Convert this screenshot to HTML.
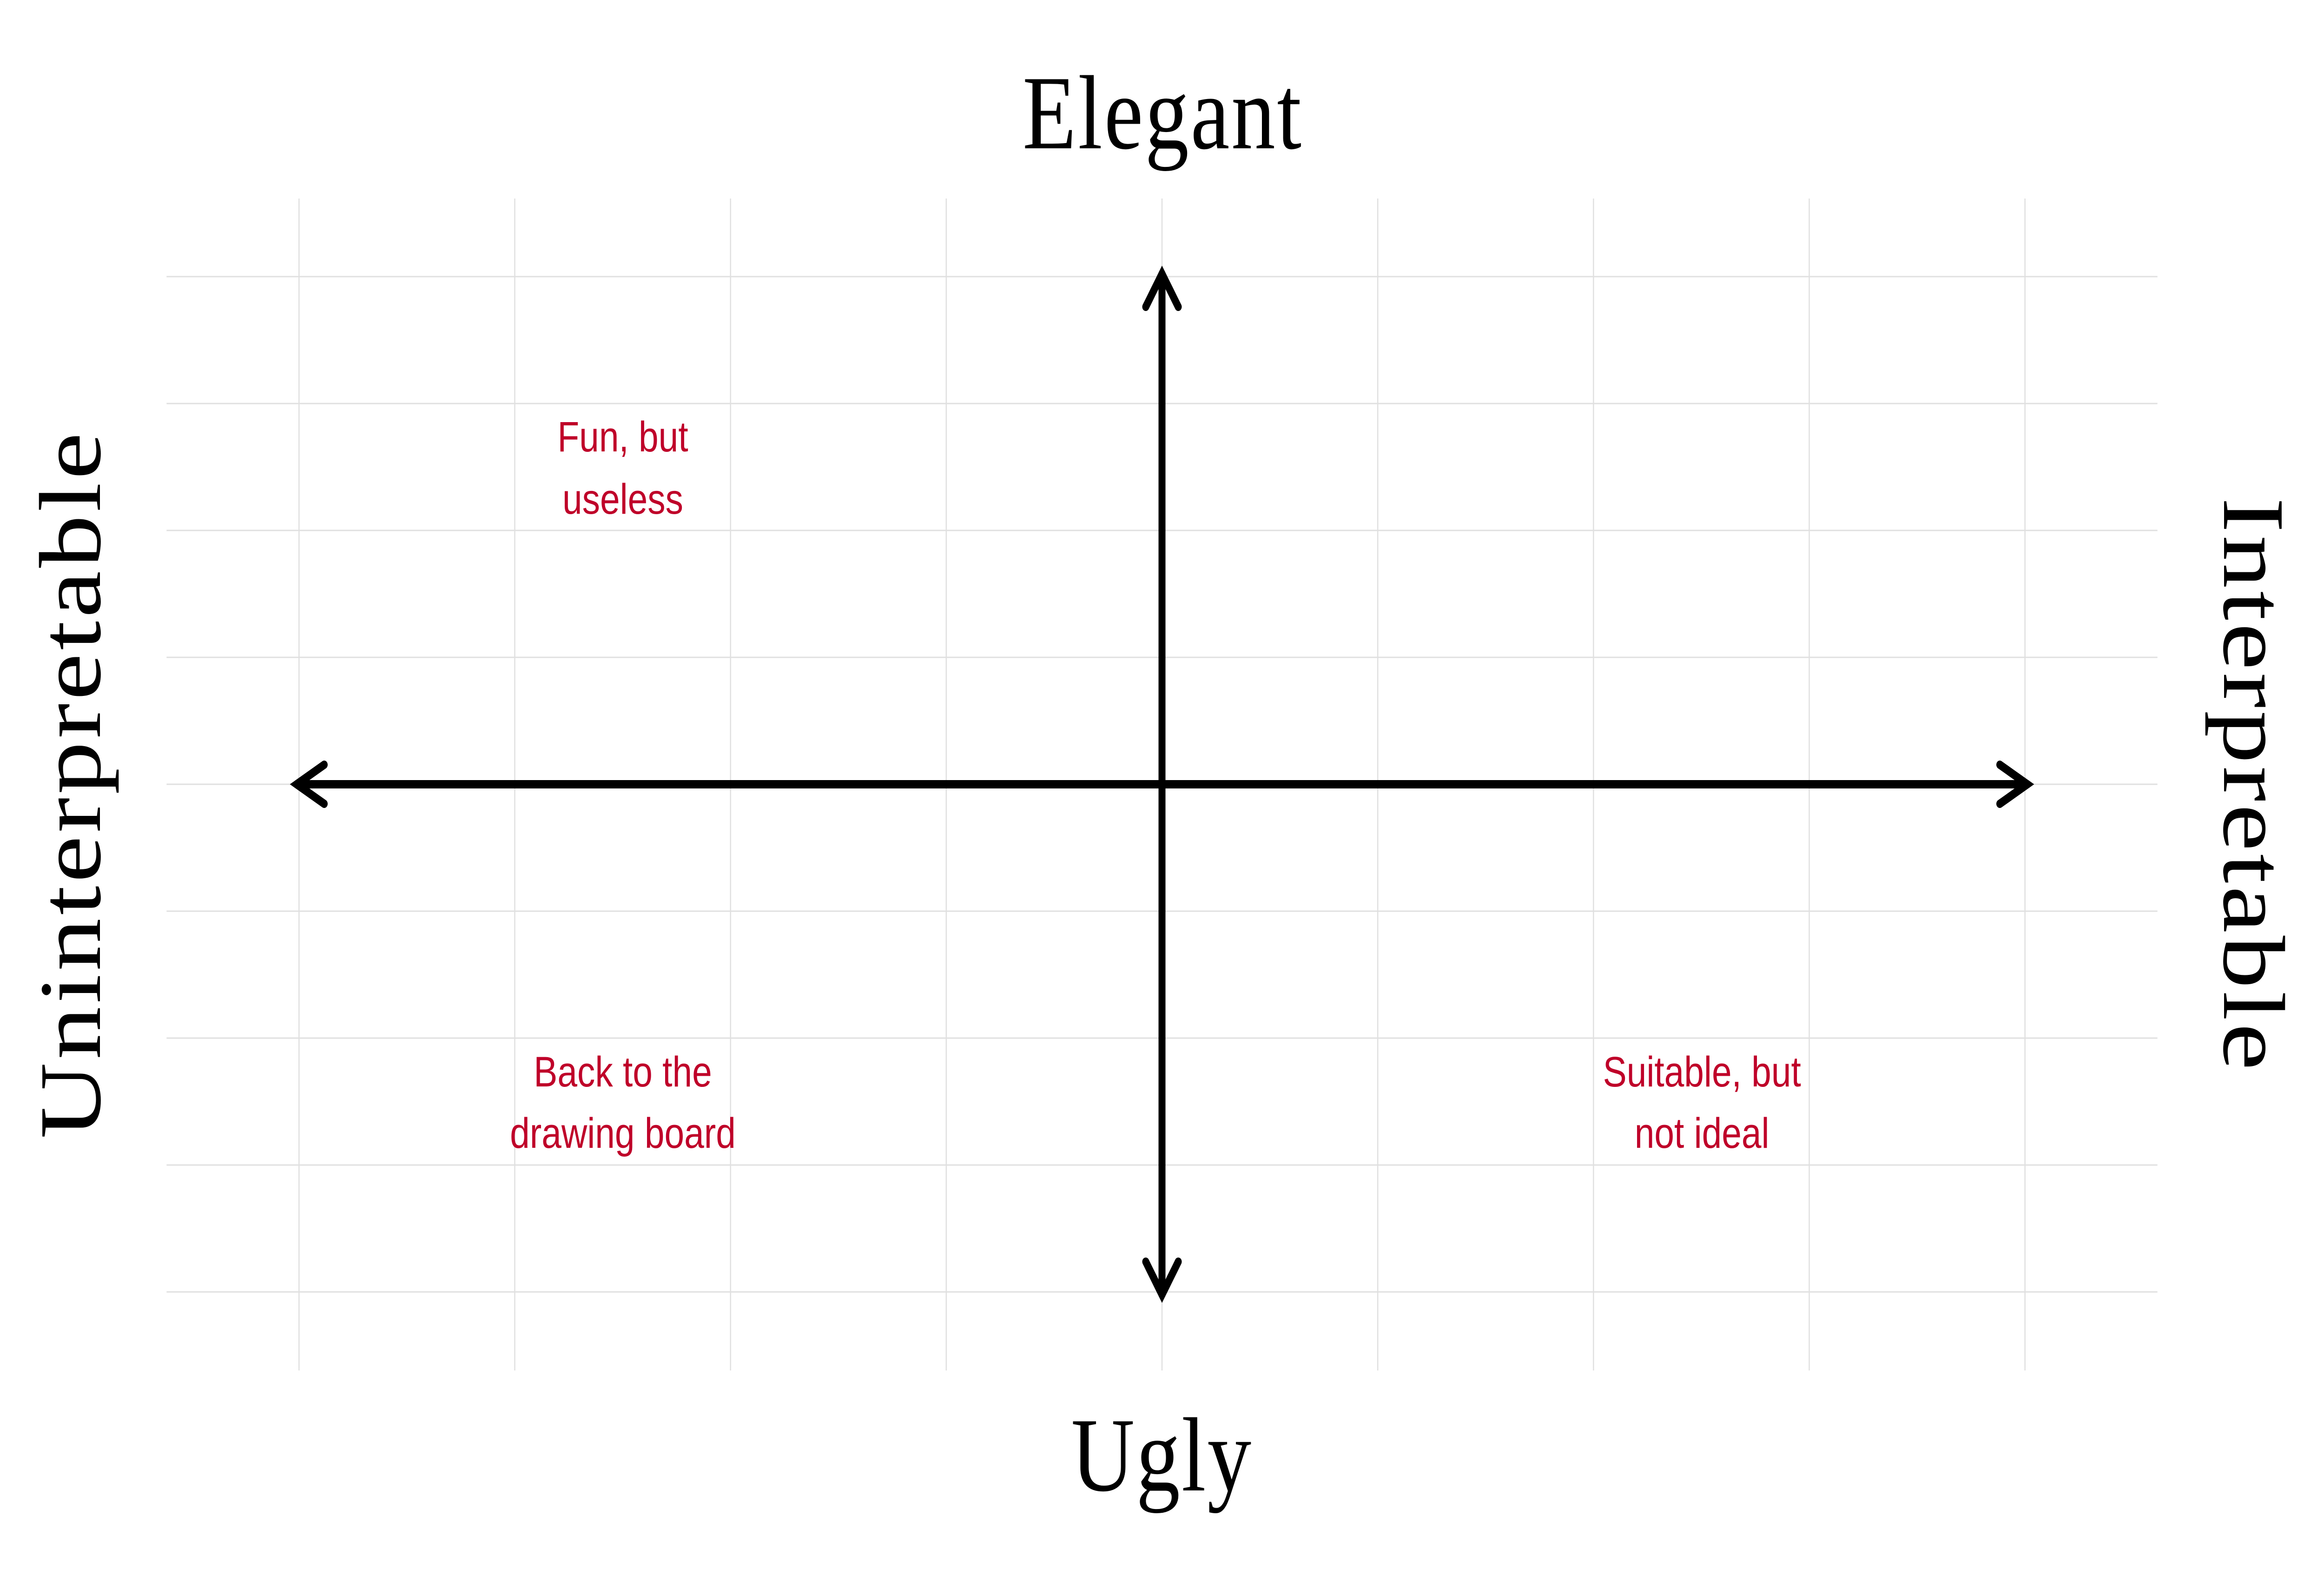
<!DOCTYPE html>
<html><head><meta charset="utf-8"><style>
html,body{margin:0;padding:0;background:#fff;width:100%;height:100%;overflow:hidden}
svg{display:block;width:100vw;height:100vh}
</style></head><body>
<svg viewBox="0 0 6000 3375" preserveAspectRatio="none" xmlns="http://www.w3.org/2000/svg">
<rect width="6000" height="3375" fill="#fff"/>
<g stroke="#e0e0e0" stroke-width="3">
<line x1="772" y1="427" x2="772" y2="2948"/>
<line x1="1329" y1="427" x2="1329" y2="2948"/>
<line x1="1886" y1="427" x2="1886" y2="2948"/>
<line x1="2443" y1="427" x2="2443" y2="2948"/>
<line x1="3000" y1="427" x2="3000" y2="2948"/>
<line x1="3557" y1="427" x2="3557" y2="2948"/>
<line x1="4114" y1="427" x2="4114" y2="2948"/>
<line x1="4671" y1="427" x2="4671" y2="2948"/>
<line x1="5228" y1="427" x2="5228" y2="2948"/>
<line x1="430" y1="595" x2="5570" y2="595"/>
<line x1="430" y1="868" x2="5570" y2="868"/>
<line x1="430" y1="1141" x2="5570" y2="1141"/>
<line x1="430" y1="1414" x2="5570" y2="1414"/>
<line x1="430" y1="1687" x2="5570" y2="1687"/>
<line x1="430" y1="1960" x2="5570" y2="1960"/>
<line x1="430" y1="2233" x2="5570" y2="2233"/>
<line x1="430" y1="2506" x2="5570" y2="2506"/>
<line x1="430" y1="2779" x2="5570" y2="2779"/>
</g>
<g stroke="#000" stroke-width="18" fill="none" stroke-linecap="round" stroke-linejoin="miter" stroke-miterlimit="10">
<line x1="766" y1="1687" x2="5234" y2="1687"/>
<line x1="3000" y1="589" x2="3000" y2="2785"/>
<polyline points="5163,1645 5234,1687 5163,1729"/>
<polyline points="837,1645 766,1687 837,1729"/>
<polyline points="2958,660 3000,589 3042,660"/>
<polyline points="2958,2714 3000,2785 3042,2714"/>
</g>
<g font-family="'Liberation Serif', serif" font-size="227" fill="#000">
<text x="3000" y="319" text-anchor="middle" textLength="720" lengthAdjust="spacing">Elegant</text>
<text x="2998" y="3206" text-anchor="middle" textLength="465" lengthAdjust="spacing">Ugly</text>
<text transform="translate(258,1690) rotate(-90)" text-anchor="middle" textLength="1519" lengthAdjust="spacing">Uninterpretable</text>
<text transform="translate(5742,1686) rotate(90)" text-anchor="middle" textLength="1232" lengthAdjust="spacing">Interpretable</text>
</g>
<g font-family="'Liberation Sans', Arial, sans-serif" font-size="92" fill="#bf0029" text-anchor="middle">
<text x="1608" y="971">Fun, but</text>
<text x="1608" y="1105">useless</text>
<text x="1608" y="2337">Back to the</text>
<text x="1608" y="2469">drawing board</text>
<text x="4394" y="2337">Suitable, but</text>
<text x="4394" y="2469">not ideal</text>
</g>
</svg>
</body></html>
